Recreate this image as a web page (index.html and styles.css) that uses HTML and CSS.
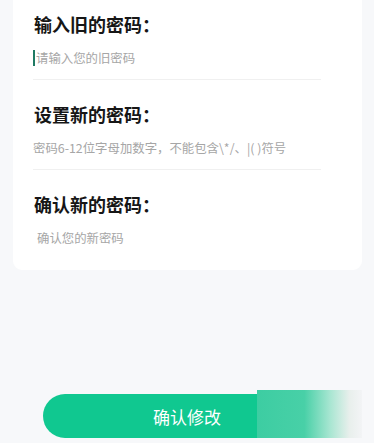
FILE: index.html
```html
<!DOCTYPE html>
<html lang="zh-CN">
<head>
<meta charset="utf-8">
<title>修改密码</title>
<link rel="stylesheet" href="styles.css">
</head>
<body>
<main class="page">
  <section class="card">
    <div class="field">
      <div class="label">输入旧的密码：</div>
      <div class="input"><span class="caret"></span><span class="ph">请输入您的旧密码</span></div>
    </div>
    <div class="field">
      <div class="label">设置新的密码：</div>
      <div class="input"><span class="ph">密码6-12位字母加数字，不能包含\*/、|( )符号</span></div>
    </div>
    <div class="field last">
      <div class="label">确认新的密码：</div>
      <div class="input indent"><span class="ph">确认您的新密码</span></div>
    </div>
  </section>
  <div class="actions">
    <button class="submit" type="button">确认修改</button>
  </div>
  <div class="fade"></div>
</main>
</body>
</html>
```
FILE: styles.css
```css
* { box-sizing: border-box; }
html, body { margin: 0; padding: 0; }
body {
  background: #f7f8fa;
  font-family: "Noto Sans CJK SC", "Noto Sans", sans-serif;
  width: 374px;
  height: 443px;
  overflow: hidden;
}
.page { position: relative; height: 443px; }
.card {
  background: #fff;
  margin: 0 12px 0 13px;
  border-radius: 0 0 9px 9px;
  padding: 12px 41px 21px 20px;
}
.field {
  padding-bottom: 10px;
  border-bottom: 1px solid #f0f0f0;
}
.field + .field { padding-top: 22px; }
.field.last { border-bottom: none; padding-bottom: 0; }
.label {
  font-size: 18px;
  line-height: 24px;
  font-weight: 600;
  color: #161616;
  padding-left: 1px;
}
.input {
  margin-top: 11px;
  height: 22px;
  display: flex;
  align-items: center;
  font-size: 12.4px;
  color: #a6a6a6;
  white-space: nowrap;
}
.input.indent { padding-left: 4px; }
.caret {
  width: 2px;
  height: 16px;
  background: #1f7a63;
  margin-right: 1px;
}
.actions {
  margin-top: 124px;
  padding: 0 43px;
}
.submit {
  display: block;
  width: 100%;
  height: 44px;
  border: none;
  border-radius: 22px;
  background: #10c890;
  color: #fff;
  font-family: "Noto Sans CJK SC", "Noto Sans", sans-serif;
  font-size: 17px;
  letter-spacing: 0;
}
.fade {
  position: absolute;
  left: 257px;
  top: 390px;
  width: 105px;
  height: 48px;
  background: linear-gradient(to right, #3dcda2 0%, #48d0a7 45%, #a9e6d2 70%, #e8efec 88%, #f3f4f6 100%);
}
```
